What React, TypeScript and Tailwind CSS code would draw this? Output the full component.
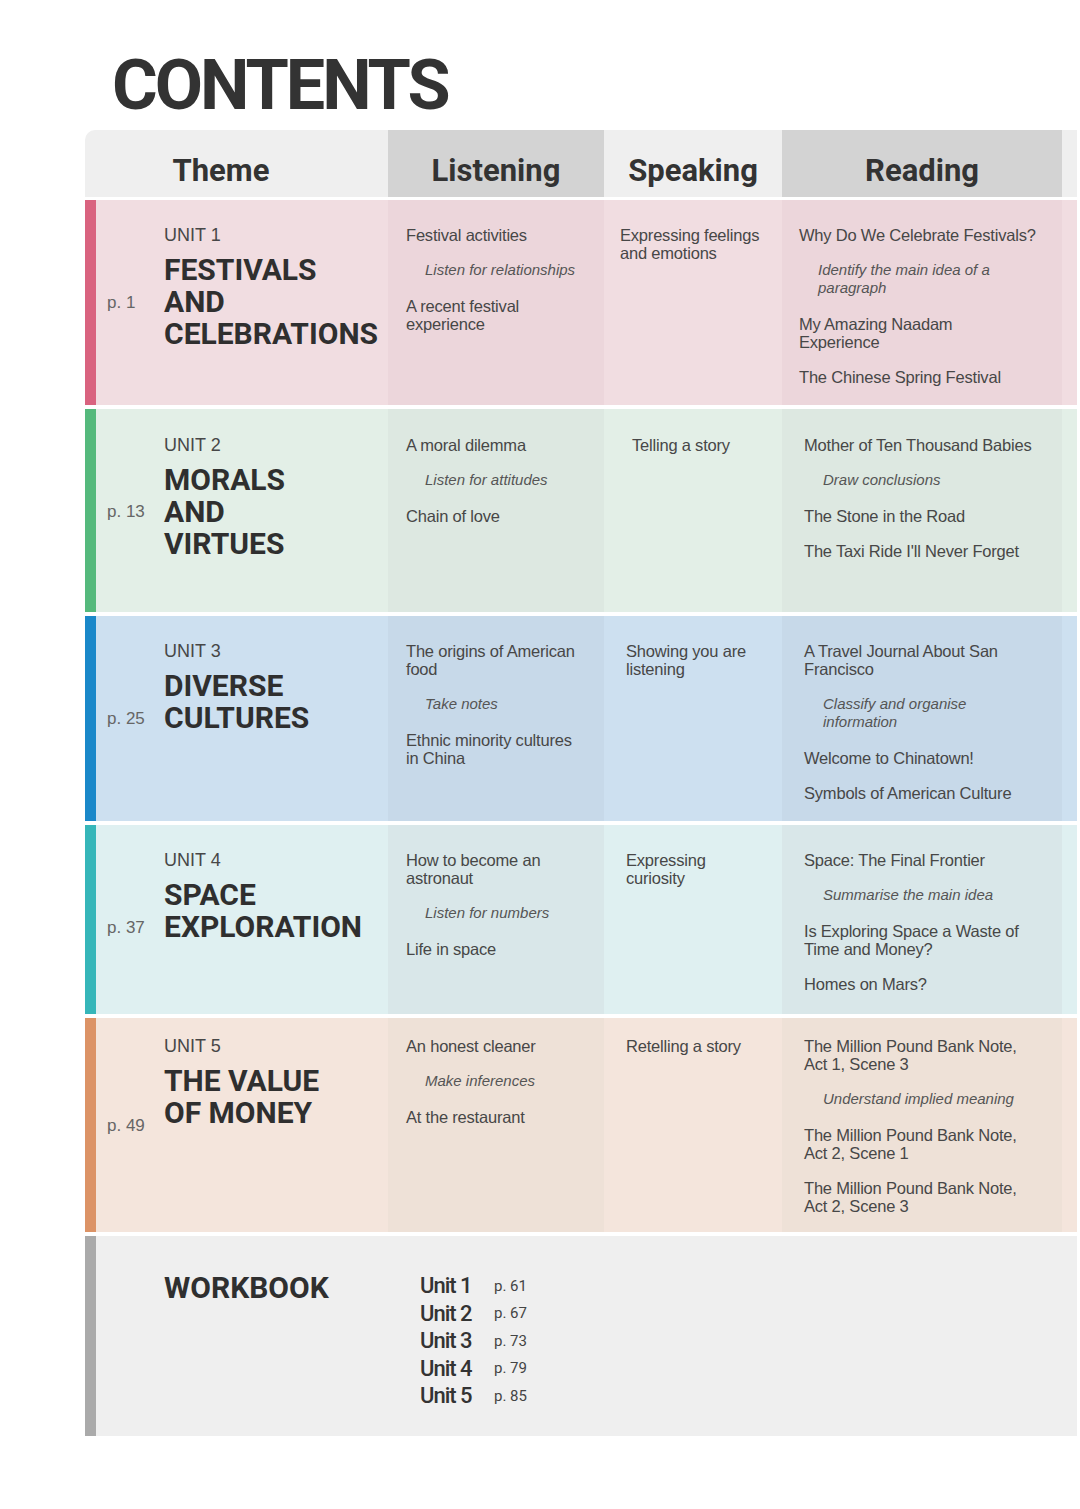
type Item = { t: string; i?: boolean };

type Unit = {
  unit: string;
  title: string[];
  page: string;
  bar: string;
  light: string;
  dark: string;
  h: string;
  pt: string;
  pOff: string;
  speakPl: string;
  readPl: string;
  listening: Item[];
  speaking: Item[];
  reading: Item[];
};

const UNITS: Unit[] = [
  {
    unit: "UNIT 1",
    title: ["FESTIVALS", "AND", "CELEBRATIONS"],
    page: "p. 1",
    bar: "bg-[#d9637f]",
    light: "bg-[#f1dde1]",
    dark: "bg-[#ecd6db]",
    h: "h-[205px]",
    pt: "pt-[26px]",
    pOff: "mt-0",
    speakPl: "pl-[16px]",
    readPl: "pl-[17px]",
    listening: [
      { t: "Festival activities" },
      { t: "Listen for relationships", i: true },
      { t: "A recent festival\nexperience" },
    ],
    speaking: [{ t: "Expressing feelings\nand emotions" }],
    reading: [
      { t: "Why Do We Celebrate Festivals?" },
      { t: "Identify the main idea of a\nparagraph", i: true },
      { t: "My Amazing Naadam\nExperience" },
      { t: "The Chinese Spring Festival" },
    ],
  },
  {
    unit: "UNIT 2",
    title: ["MORALS", "AND", "VIRTUES"],
    page: "p. 13",
    bar: "bg-[#55b97c]",
    light: "bg-[#e3efe7]",
    dark: "bg-[#dde8e1]",
    h: "h-[203px]",
    pt: "pt-[27px]",
    pOff: "mt-[3px]",
    speakPl: "pl-[28px]",
    readPl: "pl-[22px]",
    listening: [
      { t: "A moral dilemma" },
      { t: "Listen for attitudes", i: true },
      { t: "Chain of love" },
    ],
    speaking: [{ t: "Telling a story" }],
    reading: [
      { t: "Mother of Ten Thousand Babies" },
      { t: "Draw conclusions", i: true },
      { t: "The Stone in the Road" },
      { t: "The Taxi Ride I'll Never Forget" },
    ],
  },
  {
    unit: "UNIT 3",
    title: ["DIVERSE", "CULTURES"],
    page: "p. 25",
    bar: "bg-[#1a88c9]",
    light: "bg-[#cde0f0]",
    dark: "bg-[#c7d9e9]",
    h: "h-[205px]",
    pt: "pt-[26px]",
    pOff: "mt-0",
    speakPl: "pl-[22px]",
    readPl: "pl-[22px]",
    listening: [
      { t: "The origins of American\nfood" },
      { t: "Take notes", i: true },
      { t: "Ethnic minority cultures\nin China" },
    ],
    speaking: [{ t: "Showing you are\nlistening" }],
    reading: [
      { t: "A Travel Journal About San\nFrancisco" },
      { t: "Classify and organise\ninformation", i: true },
      { t: "Welcome to Chinatown!" },
      { t: "Symbols of American Culture" },
    ],
  },
  {
    unit: "UNIT 4",
    title: ["SPACE", "EXPLORATION"],
    page: "p. 37",
    bar: "bg-[#36b6b9]",
    light: "bg-[#dff0f1]",
    dark: "bg-[#d9e7e9]",
    h: "h-[189px]",
    pt: "pt-[26px]",
    pOff: "mt-[16px]",
    speakPl: "pl-[22px]",
    readPl: "pl-[22px]",
    listening: [
      { t: "How to become an\nastronaut" },
      { t: "Listen for numbers", i: true },
      { t: "Life in space" },
    ],
    speaking: [{ t: "Expressing\ncuriosity" }],
    reading: [
      { t: "Space: The Final Frontier" },
      { t: "Summarise the main idea", i: true },
      { t: "Is Exploring Space a Waste of\nTime and Money?" },
      { t: "Homes on Mars?" },
    ],
  },
  {
    unit: "UNIT 5",
    title: ["THE VALUE", "OF MONEY"],
    page: "p. 49",
    bar: "bg-[#dc9366]",
    light: "bg-[#f4e5dc]",
    dark: "bg-[#eee1d7]",
    h: "h-[214px]",
    pt: "pt-[19px]",
    pOff: "mt-[2px]",
    speakPl: "pl-[22px]",
    readPl: "pl-[22px]",
    listening: [
      { t: "An honest cleaner" },
      { t: "Make inferences", i: true },
      { t: "At the restaurant" },
    ],
    speaking: [{ t: "Retelling a story" }],
    reading: [
      { t: "The Million Pound Bank Note,\nAct 1, Scene 3" },
      { t: "Understand implied meaning", i: true },
      { t: "The Million Pound Bank Note,\nAct 2, Scene 1" },
      { t: "The Million Pound Bank Note,\nAct 2, Scene 3" },
    ],
  },
];

const WORKBOOK = [
  ["Unit 1", "p. 61"],
  ["Unit 2", "p. 67"],
  ["Unit 3", "p. 73"],
  ["Unit 4", "p. 79"],
  ["Unit 5", "p. 85"],
];

const display = "font-['Roboto',_'DejaVu_Sans',_sans-serif]";
const body = "font-['Liberation_Sans',_Arial,_sans-serif]";

function Items({ items }: { items: Item[] }) {
  return (
    <div className="flex flex-col gap-[17px]">
      {items.map((it) =>
        it.i ? (
          <p
            key={it.t}
            className="whitespace-pre-line pl-[19px] pb-[1px] text-[15px] italic leading-[18px] text-[#555]"
          >
            {it.t}
          </p>
        ) : (
          <p
            key={it.t}
            className="whitespace-pre-line text-[16.5px] leading-[18px] tracking-[-0.2px] text-[#474747]"
          >
            {it.t}
          </p>
        ),
      )}
    </div>
  );
}

function UnitRow({ u }: { u: Unit }) {
  return (
    <div
      className={`grid grid-cols-[11px_292px_216px_178px_280px_15px] ${u.h} ${body}`}
    >
      <div className={u.bar} />
      <div className={`flex ${u.light}`}>
        <div className="flex w-[68px] items-center pl-[11px]">
          <span className={`${u.pOff} text-[17px] text-[#666]`}>{u.page}</span>
        </div>
        <div className={u.pt}>
          <p className="text-[18px] leading-[18px] text-[#474747]">{u.unit}</p>
          <div
            className={`mt-[10px] text-[30px] font-bold leading-[32px] text-[#2f2f2f] ${display}`}
          >
            {u.title.map((l) => (
              <div key={l}>{l}</div>
            ))}
          </div>
        </div>
      </div>
      <div className={`${u.dark} ${u.pt} pl-[18px] pr-2`}>
        <Items items={u.listening} />
      </div>
      <div className={`${u.light} ${u.pt} ${u.speakPl} pr-2`}>
        <Items items={u.speaking} />
      </div>
      <div className={`${u.dark} ${u.pt} ${u.readPl} pr-2`}>
        <Items items={u.reading} />
      </div>
      <div className={u.light} />
    </div>
  );
}

export default function App() {
  return (
    <div className="min-h-[1509px] w-[1080px] bg-white pt-[50px]">
      <h1
        className={`ml-[112px] text-[70px] font-bold leading-none tracking-[-3px] text-[#333] ${display}`}
      >
        CONTENTS
      </h1>

      <div className="ml-[85px] mt-[10px] flex w-[992px] flex-col">
        {/* Header */}
        <div
          className={`grid h-[67px] grid-cols-[303px_216px_178px_280px_15px] overflow-hidden rounded-tl-[10px] text-[31px] font-bold text-[#333] ${display}`}
        >
          <div className="flex items-center justify-center bg-[#efefef] pr-[31px] pt-[15px]">
            Theme
          </div>
          <div className="flex items-center justify-center bg-[#d3d3d3] pt-[15px]">
            Listening
          </div>
          <div className="flex items-center justify-center bg-[#efefef] pt-[15px]">
            Speaking
          </div>
          <div className="flex items-center justify-center bg-[#d3d3d3] pt-[15px]">
            Reading
          </div>
          <div className="bg-[#efefef]" />
        </div>

        <div className="mt-[3px] flex flex-col gap-[4px]">
          {UNITS.map((u) => (
            <UnitRow key={u.unit} u={u} />
          ))}

          {/* Workbook */}
          <div className="grid h-[200px] grid-cols-[11px_981px]">
            <div className="bg-[#aaaaaa]" />
            <div className="flex bg-[#efefef]">
              <div
                className={`ml-[68px] w-[256px] pt-[36px] text-[30px] font-bold leading-[32px] text-[#2f2f2f] ${display}`}
              >
                WORKBOOK
              </div>
              <div className={`pt-[36px] ${display}`}>
                {WORKBOOK.map(([unit, page]) => (
                  <div key={unit} className="flex h-[27.5px] items-center">
                    <span className="w-[74px] text-[22px] font-medium tracking-[-1px] text-[#333]">
                      {unit}
                    </span>
                    <span className="text-[15px] text-[#444]">{page}</span>
                  </div>
                ))}
              </div>
            </div>
          </div>
        </div>
      </div>
    </div>
  );
}
